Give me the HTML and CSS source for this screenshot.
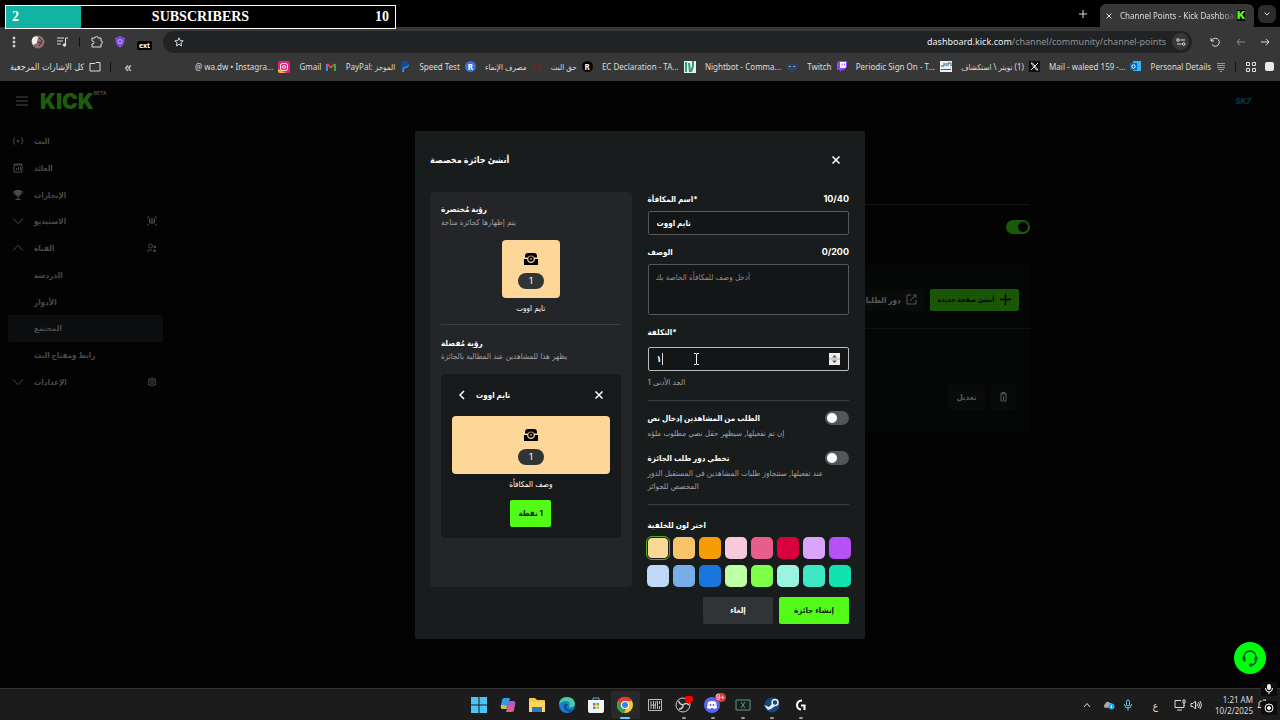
FILE: index.html
```html
<!DOCTYPE html>
<html lang="ar" dir="ltr">
<head>
    <meta charset="UTF-8">
    <meta name="viewport" content="width=device-width, initial-scale=1.0">
    <title>Channel Points - Kick Dashboard</title>
    <link rel="stylesheet" href="styles.css">
</head>
<body>
    <!-- Stream goal overlay -->
    <div class="goal">
        <span>2</span>
        <span>SUBSCRIBERS</span>
        <span>10</span>
    </div>

    <!-- Browser -->
    <header class="browser">
        <div class="tabs">
            <button class="icon-btn" aria-label="New tab"><svg width="8" height="8" viewBox="0 0 8 8"><path d="M4 0v8M0 4h8"/></svg></button>
            <div class="tab">
                <button class="icon-btn" aria-label="Close tab"><svg width="6" height="6" viewBox="0 0 6 6"><path d="M.5.5l5 5M5.500.5l-5 5"/></svg></button>
                <span class="tab-title">Channel Points - Kick Dashboar</span>
                <span class="favicon">K</span>
            </div>
            <button class="tab-menu" aria-label="Search tabs"><svg width="6" height="4" viewBox="0 0 6 4"><path d="M.5.5L3 3 5.500.5"/></svg></button>
        </div>
        <div class="toolbar">
            <div class="tools">
                <svg class="fill" width="12" height="12" viewBox="0 0 12 12"><circle cx="6" cy="2" r="1"/><circle cx="6" cy="6" r="1"/><circle cx="6" cy="10" r="1"/></svg>
                <svg width="14" height="14" viewBox="0 0 14 14"><circle cx="7" cy="7" r="6.500" fill="#8c6f70" stroke="none"/><path d="M1 4Q3 0 7 2L6 8 2 10Q0 7 1 4" fill="#eee" stroke="none"/><path d="M8 3l3 3-3 5M6 7l5 1" stroke="#5c2733"/></svg>
                <svg width="12" height="12" viewBox="0 0 12 12"><path d="M1 2h7M1 5h6M1 8h4M9.500 9V2H12"/><circle cx="8.500" cy="9" r="1.300" fill="#ddd"/></svg>
                <i class="sep"></i>
                <svg width="12" height="12" viewBox="0 0 12 12"><path d="M1 2h3q0-1.500 1.500-1.500T7 2h3v3q1.500 0 1.500 1.300T10 8v3H1V8q2 0 2-1.500T1 5z"/></svg>
                <svg width="12" height="12" viewBox="0 0 12 12"><path d="M6 0l5 2q0 7-5 10Q1 9 1 2z" fill="#7b4bd0" stroke="none"/><circle cx="6" cy="5.500" r="2" stroke="#c7adff"/></svg>
                <span class="ext">ext</span>
            </div>
            <div class="address">
                <svg width="10" height="10" viewBox="0 0 10 10"><path d="M5 .8l1.200 2.800 3 .3-2.300 2 .7 3L5 7.300 2.400 8.900l.7-3-2.300-2 3-.3z"/></svg>
                <span class="url"><b>dashboard.kick.com</b>/channel/community/channel-points</span>
                <span class="site-info"><svg width="10" height="8" viewBox="0 0 10 8"><path d="M4.500 2H9M1 6h4.500"/><circle cx="2" cy="2" r="1.300"/><circle cx="7.700" cy="6" r="1.300"/></svg></span>
            </div>
            <svg width="10" height="10" viewBox="0 0 10 10"><path d="M1 1v3h3M1.500 4A4 4 0 1 1 2 7.500"/></svg>
            <svg class="dim" width="9" height="8" viewBox="0 0 9 8"><path d="M9 4H1M4 .8L1 4l3 3.200"/></svg>
            <svg width="9" height="8" viewBox="0 0 9 8"><path d="M0 4h8M5 .8L8 4 5 7.200"/></svg>
        </div>
        <nav class="bookmarks">
            <a href="#" class="all">كل الإشارات المرجعية<svg width="12" height="10" viewBox="0 0 12 10"><path d="M1 1.500h5l1-1h4v8.500H1z"/></svg></a>
            <i class="sep"></i>
            <a href="#" class="more">«</a>
            <a href="#">@ wa.dw • Instagra...<svg width="12" height="12" viewBox="0 0 12 12"><rect width="12" height="12" rx="2" fill="#e8207d" stroke="none"/><path d="M0 8l8 4H2Q0 12 0 10z" fill="#ffae2b" stroke="none"/><rect x="2.500" y="2.500" width="7" height="7" rx="2" stroke="#fff"/><circle cx="6" cy="6" r="1.500" stroke="#fff"/></svg></a>
            <a href="#">Gmail<svg width="10" height="8" viewBox="0 0 10 8"><path d="M1 8V1" stroke="#4285f4" stroke-width="2"/><path d="M1 1l4 3.500L9 1" stroke="#ea4335" stroke-width="2"/><path d="M9 8V1" stroke="#34a853" stroke-width="2"/></svg></a>
            <a href="#">PayPal: الموجز<svg width="10" height="11" viewBox="0 0 10 11"><path d="M2 0h4q3 0 2.500 3T4 6L3 9H0z" fill="#174a9c" stroke="none"/><path d="M8.500 3q1.500 4-4 4L4 11H2l1.500-5Q8 6 8.500 3" fill="#21a4e0" stroke="none"/></svg></a>
            <a href="#">Speed Test<span class="round blue">R</span></a>
            <a href="#">مصرف الإنماء<svg width="10" height="10" viewBox="0 0 10 10"><circle cx="5" cy="5" r="3.500" stroke="#6d2a25" stroke-width="2" stroke-dasharray="2 1"/></svg></a>
            <a href="#">حق البث<span class="round">R</span></a>
            <a href="#">EC Declaration - TA...<svg width="12" height="12" viewBox="0 0 12 12"><path d="M0 0h12v12H0z" fill="#e6f3ec" stroke="none"/><path d="M2 1v10M5 2l1 9M9 0v5l-2 6" stroke="#2d9e77" stroke-width="2"/></svg></a>
            <a href="#">Nightbot - Comma...<svg width="12" height="12" viewBox="0 0 12 12"><path d="M1 1l2 2h6l2-2v7L6 11 1 8z" fill="#2d435f" stroke="none"/><path d="M3 5.500h1.500M7.500 5.500H9" stroke="#b8ccee"/></svg></a>
            <a href="#">Twitch<svg width="10" height="11" viewBox="0 0 10 11"><path d="M2 0h8v6L7 9H5l-2 2V9H0V2z" fill="#9146ff" stroke="none"/><path d="M3 1h6v5L8 7H3z" fill="#fff" stroke="none"/><path d="M5 2.500v2M7.500 2.500v2" stroke="#9146ff"/></svg></a>
            <a href="#">Periodic Sign On - T...<svg width="12" height="11" viewBox="0 0 12 11"><path d="M0 0h12v11H0z" fill="#eaf0f4" stroke="none"/><path d="M1 5h3V2M6 5V2M8 5V2h3v3M1 8.500h10" stroke="#246b8c"/></svg></a>
            <a href="#"><bdi dir="rtl">(1) تويتر \ استكشاف</bdi><svg width="11" height="11" viewBox="0 0 11 11"><path d="M0 0h11v11H0z" fill="#0b0b0b" stroke="none"/><path d="M2 2h1.500L9 9H7.500zM9 2L2 9"/></svg></a>
            <a href="#">Mail - waleed 159 -...<svg width="11" height="11" viewBox="0 0 11 11"><path d="M3 0h8v10H3z" fill="#35b5ef" stroke="none"/><path d="M0 2h7v7H0z" fill="#0a62b7" stroke="none"/><circle cx="3.500" cy="5.500" r="1.700" stroke="#fff"/></svg></a>
            <a href="#">Personal Details<svg width="10" height="10" viewBox="0 0 10 10"><path d="M1 1.500h8M1 3.500h8M1 5.500h8M2 7.500h6M4 9.500h2" stroke="#999"/></svg></a>
            <i class="sep"></i>
            <svg class="apps" width="10" height="10" viewBox="0 0 10 10"><path d="M.5.5h3v3h-3zM6.500.5h3v3h-3zM.5 6.500h3v3h-3zM6.500 6.500h3v3h-3z"/></svg>
            <i class="square"></i>
        </nav>
    </header>

    <div class="page">
        <aside class="sidebar">
            <div class="brand">
                <svg width="12" height="10" viewBox="0 0 12 10"><path d="M0 1h12M0 5h12M0 9h12"/></svg>
                <span class="logo">KICK</span><sup>BETA</sup>
            </div>
            <ul class="menu">
                <li><svg viewBox="0 0 12 12"><path d="M2.500 2.500q-2.500 3.500 0 7M9.500 2.500q2.500 3.500 0 7"/><circle cx="6" cy="6" r="1"/></svg><a href="#">البث</a></li>
                <li><svg viewBox="0 0 12 12"><path d="M2 2h8v8H2zM2 3h8M4.500 8V6M6.500 8V5M8.500 8V5"/></svg><a href="#">العائد</a></li>
                <li><svg viewBox="0 0 12 12"><path d="M3.500 1.500h5v3Q8 7 6 7T3.500 4.500z" fill="#4a4a4a"/><path d="M3 2.500H1.500q0 3 2.500 3M9 2.500h1.500q0 3-2.500 3M6 7v3M3.500 10.500h5"/></svg><a href="#">الإنجازات</a></li>
                <li><svg viewBox="0 0 12 12"><path d="M1 3.500l5 5 5-5"/></svg><a href="#">الاستيديو</a><svg viewBox="0 0 12 12"><path d="M2 3.500V2h1M9 2h1v1.500M10 9v1H9M3 10H2V9M3.500 4h5v4h-5z"/><circle cx="6" cy="6" r="1"/></svg></li>
                <li><svg viewBox="0 0 12 12"><path d="M1 8.500l5-5 5 5"/></svg><a href="#">القناة</a><svg viewBox="0 0 12 12"><circle cx="4.500" cy="4" r="2"/><path d="M2 10V8h4M8 4h1.500v1.500H8zM7.500 8h2v1.500h-2z"/></svg></li>
                <li><a href="#">الدردشة</a></li>
                <li><a href="#">الأدوار</a></li>
                <li class="active"><a href="#">المجتمع</a></li>
                <li><a href="#">رابط ومفتاح البث</a></li>
                <li><svg viewBox="0 0 12 12"><path d="M1 3.500l5 5 5-5"/></svg><a href="#">الإعدادات</a><svg viewBox="0 0 12 12"><path d="M6 1.800l1 1.400 2.600-.2-.6 1.800.9 1.200-.9 1.300.6 1.700L7 8.800 6 10.200 5 8.800 2.400 9 3 7.300 2.100 6 3 4.800 2.400 3l2.600.2z"/><circle cx="6" cy="6" r="1.500"/></svg></li>
            </ul>
        </aside>

        <main class="content">
            <div class="account">SK7</div>
            <section class="points">
                <div class="enable"><input type="checkbox" class="switch on" aria-label="نقاط القناة" checked></div>
                <div class="rewards">
                    <div class="rewards-head">
                        <button class="dark-btn">دور الطلبات<svg width="11" height="11" viewBox="0 0 11 11"><path d="M5 1H1v9h9V6M7 1h3v3M10 1L4 7"/></svg></button>
                        <button class="new-btn">أنشئ صفحة جديدة<svg width="11" height="11" viewBox="0 0 11 11"><path d="M5.500 0v11M0 5.500h11" stroke-width="1.500"/></svg></button>
                    </div>
                    <div class="reward-row">
                        <button class="dark-btn">تعديل</button>
                        <button class="dark-btn" aria-label="حذف"><svg width="9" height="10" viewBox="0 0 9 10"><path d="M1 2h7M3 2V.5h3V2M2 2.500v6.500h5v-6.500M4.500 4v4"/></svg></button>
                    </div>
                </div>
            </section>
        </main>

        <div class="backdrop">
            <form class="modal" role="dialog" aria-labelledby="modal-title">
                <div class="modal-head">
                    <h1 id="modal-title">أنشئ جائزة مخصصة</h1>
                    <button type="button" class="close" aria-label="إغلاق"><svg width="8" height="8" viewBox="0 0 8 8"><path d="M.5.5l7 7M7.500.5l-7 7"/></svg></button>
                </div>
                <div class="modal-body">
                    <div class="preview">
                        <h2>رؤية مُختصرة</h2>
                        <p class="muted">يتم إظهارها كجائزة متاحة</p>
                        <div class="tile small">
                            <svg width="14" height="12" viewBox="0 0 14 12"><path d="M1 4.500V3q0-3 3-3h6q3 0 3 3v1.500h-2.500Q9 2.500 7 2.500T3.500 4.500zM0 6h3q.5 4 4 4t4-4h3v6H0z"/><circle cx="7" cy="6" r="2.700"/><path d="M7 5v2" class="key"/></svg>
                            <span class="pill">1</span>
                        </div>
                        <p class="caption">تايم اووت</p>
                        <hr>
                        <h2>رؤية مُفصلة</h2>
                        <p class="muted">يظهر هذا للمشاهدين عند المطالبة بالجائزة</p>
                        <div class="detail">
                            <div class="detail-head">
                                <svg width="6" height="10" viewBox="0 0 6 10"><path d="M5 1L1 5l4 4"/></svg>
                                <strong>تايم اووت</strong>
                                <svg width="8" height="8" viewBox="0 0 8 8"><path d="M.5.5l7 7M7.500.5l-7 7"/></svg>
                            </div>
                            <div class="tile">
                                <svg width="14" height="12" viewBox="0 0 14 12"><path d="M1 4.500V3q0-3 3-3h6q3 0 3 3v1.500h-2.500Q9 2.500 7 2.500T3.500 4.500zM0 6h3q.5 4 4 4t4-4h3v6H0z"/><circle cx="7" cy="6" r="2.700"/><path d="M7 5v2" class="key"/></svg>
                                <span class="pill">1</span>
                            </div>
                            <p class="caption">وصف المكافأة</p>
                            <button type="button" class="claim" dir="rtl">1 نقطة</button>
                        </div>
                    </div>

                    <div class="fields">
                        <div class="label-row"><label for="rewardName">اسم المكافأة*</label><span class="count">10/40</span></div>
                        <input type="text" id="rewardName" value="تايم اووت">
                        <div class="label-row"><label for="rewardText">الوصف</label><span class="count">0/200</span></div>
                        <textarea id="rewardText" placeholder="أدخل وصف للمكافأة الخاصة بك"></textarea>
                        <div class="label-row"><label for="rewardCost">التكلفة*</label></div>
                        <div class="cost">
                            <input type="text" inputmode="numeric" id="rewardCost" value="١">
                            <i class="caret"></i>
                            <svg class="spinner" width="11" height="12" viewBox="0 0 11 12"><path d="M0 0h11v12H0z" fill="#eee"/><path d="M3 4.500L5.500 2 8 4.500zM3 7.500L5.500 10 8 7.500z" fill="#555"/><path d="M0 6h11" stroke="#aaa"/></svg>
                            <svg class="pointer" width="5" height="12" viewBox="0 0 5 12"><path d="M0 .5h2l.5.5.5-.5h2M2.500 1v10M0 11.500h2l.5-.5.5.5h2"/></svg>
                        </div>
                        <p class="muted hint">الحد الأدنى 1</p>
                        <hr>
                        <div class="label-row"><label for="askText">الطلب من المشاهدين إدخال نص</label><input type="checkbox" class="switch" id="askText"></div>
                        <p class="muted">إن تم تفعيلها, سيظهر حقل نصي مطلوب ملؤه</p>
                        <div class="label-row"><label for="skipQueue">تخطي دور طلب الجائزة</label><input type="checkbox" class="switch" id="skipQueue"></div>
                        <p class="muted">عند تفعيلها, ستتجاوز طلبات المشاهدين في المستقبل الدور المخصص للجوائز</p>
                        <hr>
                        <div class="label-row color-label"><span id="colorLabel">اختر لون للخلفية</span></div>
                        <div class="colors" role="radiogroup" aria-labelledby="colorLabel">
                            <input type="radio" name="color" class="peach" aria-label="peach" checked>
                            <input type="radio" name="color" class="apricot" aria-label="apricot">
                            <input type="radio" name="color" class="orange" aria-label="orange">
                            <input type="radio" name="color" class="pink" aria-label="pink">
                            <input type="radio" name="color" class="rose" aria-label="rose">
                            <input type="radio" name="color" class="red" aria-label="red">
                            <input type="radio" name="color" class="lilac" aria-label="lilac">
                            <input type="radio" name="color" class="purple" aria-label="purple">
                            <input type="radio" name="color" class="ice" aria-label="ice">
                            <input type="radio" name="color" class="sky" aria-label="sky">
                            <input type="radio" name="color" class="azure" aria-label="azure">
                            <input type="radio" name="color" class="lime" aria-label="lime">
                            <input type="radio" name="color" class="green" aria-label="green">
                            <input type="radio" name="color" class="mint" aria-label="mint">
                            <input type="radio" name="color" class="aqua" aria-label="aqua">
                            <input type="radio" name="color" class="teal" aria-label="teal">
                        </div>
                    </div>
                </div>
                <div class="modal-foot">
                    <button type="button" class="cancel">إلغاء</button>
                    <button type="button" class="submit">إنشاء جائزة</button>
                </div>
            </form>
        </div>

        <button class="support" aria-label="Support"><svg width="18" height="18" viewBox="0 0 18 18"><path d="M3 10V8a6 6 0 0 1 12 0v2M15 11q0 4-4 5" stroke-width="1.500"/><path d="M2 8h2v4H3Q1 10 2 8M16 8h-2v4h1q2-2 1-4" fill="#052"/><circle cx="10" cy="16" r="1.300" fill="#052"/></svg></button>
    </div>

    <!-- Windows taskbar -->
    <footer class="taskbar">
        <div class="apps-row">
            <span><svg viewBox="0 0 18 18"><path d="M1 1h7.500v7.500H1zM9.500 1H17v7.500H9.500zM1 9.500h7.500V17H1zM9.500 9.500H17V17H9.500z" fill="#4cc2f5"/></svg></span>
            <span><svg viewBox="0 0 18 18"><path d="M5 2h6L8 13H4q-3 0-2-4l1-5q.5-2 2-2" fill="#2b9fe0"/><path d="M4 9l4 1-1 3H4q-3 0-2-4z" fill="#e6b93c"/><path d="M10 5h4q3 0 2 4l-1 5q-.5 2-2 2H7z" fill="#e05b8c"/><path d="M10 5h4q3 0 2 4L9 9z" fill="#a25be0"/></svg></span>
            <span><svg viewBox="0 0 18 18"><path d="M1 3q0-1 1-1h5l2 2h7q1 0 1 1v11H1z" fill="#f7c94a"/><path d="M1 6h16v10H1z" fill="#ffd65c"/><path d="M4 11h10v5H4z" fill="#2b77ba"/></svg></span>
            <span><svg viewBox="0 0 18 18"><circle cx="9" cy="9" r="8" fill="#1b7fcf"/><path d="M1 8q1-7 8-7 7 0 8 7-1 4-6 3 2-6-3-6Q4 5 1 8" fill="#42cf9c"/><path d="M6 8q-2 7 6 8 3-1 4-3-5 2-7-1-1-2 1-4z" fill="#12539a"/></svg></span>
            <span><svg viewBox="0 0 18 18"><path d="M6 5V2h6v3" fill="none" stroke="#55aee8"/><path d="M1 4h16v11q0 2-2 2H3q-2 0-2-2z" fill="#f1f3f5"/><path d="M6 7h2.500v2.500H6z" fill="#e45334"/><path d="M9.500 7H12v2.500H9.500z" fill="#6eaf3a"/><path d="M6 10.500h2.500V13H6z" fill="#2f95dd"/><path d="M9.500 10.500H12V13H9.500z" fill="#f2b530"/></svg></span>
            <span class="current"><svg viewBox="0 0 18 18"><circle cx="9" cy="9" r="8" fill="#f8c830"/><path d="M2 5a8 8 0 0 1 14 0H9a4 4 0 0 0-4 5z" fill="#e33b2e"/><path d="M2 5l4 7 4 1-2 4A8 8 0 0 1 2 5" fill="#2ba24c"/><circle cx="9" cy="9" r="4" fill="#fff"/><circle cx="9" cy="9" r="3" fill="#3f7fe8"/></svg></span>
            <span><svg viewBox="0 0 18 18"><g fill="none" stroke="#bbb"><path d="M2.500 3.500h13v11h-13z"/><path d="M5 5v8M7.500 5v8M5 9h4M10 5l-1 8M11.500 5v8M13.500 5v3M13.500 10v3"/></g></svg></span>
            <span class="running"><svg viewBox="0 0 18 18"><circle cx="8" cy="9" r="7" fill="#222" stroke="#ccc"/><path d="M8 9q-4-1-4-4M8 9q3-3 6 0M8 9q0 4-4 4" fill="none" stroke="#ccc" stroke-width="1.500"/><circle cx="14" cy="3" r="4" fill="#f00"/></svg></span>
            <span class="running"><svg viewBox="0 0 18 18"><circle cx="8" cy="9" r="8" fill="#5865f2"/><path d="M4 6q4-2 8 0l1 6-3 1-1-1H7l-1 1-3-1z" fill="#fff"/><circle cx="6.500" cy="9" r="1" fill="#5865f2"/><circle cx="9.500" cy="9" r="1" fill="#5865f2"/></svg><em>9+</em></span>
            <span class="running"><svg viewBox="0 0 18 18"><path d="M2 4h14v10H2zM7 6l4 6M11 6l-4 6" fill="none" stroke="#5c9780"/></svg></span>
            <span class="running"><svg viewBox="0 0 18 18"><circle cx="9" cy="9" r="7.500" fill="#14477c"/><path d="M1 9l5 2 4-4 2 3-4 3-3 1z" fill="#eee"/><circle cx="12" cy="6.500" r="3" fill="#14477c" stroke="#eee" stroke-width="1.500"/></svg></span>
            <span class="running"><svg viewBox="0 0 18 18"><path d="M10 4.500Q5 5 5 9t4 4.500M9 9.500h3.500V14" fill="none" stroke="#fff" stroke-width="2"/></svg></span>
        </div>
        <div class="tray">
            <svg width="8" height="6" viewBox="0 0 8 6"><path d="M1 5l3-3.500L7 5"/></svg>
            <svg width="12" height="10" viewBox="0 0 12 10"><path d="M2 8Q0 6 2 4q2-4 5-1 3 0 3 4z" fill="#aaa" stroke="none"/><circle cx="8.500" cy="6.500" r="3" fill="#25a7e8" stroke="none"/><path d="M8.500 5v3" stroke="#fff"/></svg>
            <svg width="10" height="12" viewBox="0 0 10 12"><rect x="3.500" y="1" width="3" height="6" rx="1.500" stroke="#7cc8e8"/><path d="M1.500 5q0 4 3.500 4t3.500-4M5 9v2.500" stroke="#7cc8e8"/></svg>
            <span class="lang">ع</span>
            <svg width="12" height="12" viewBox="0 0 12 12"><path d="M7 1.500H1v7h9V6M3 11h5M9 1h2v3H9zM10 4v3"/></svg>
            <svg width="12" height="10" viewBox="0 0 12 10"><path d="M1 3.500h2L5.500 1v8L3 6.500H1zM7 3.500q1 1.500 0 3M8.500 2q2 3 0 6M10 1q3 4 0 8"/></svg>
            <div class="clock"><time>1:21 AM</time><time>10/2/2025</time></div>
            <svg width="10" height="11" viewBox="0 0 10 11"><path d="M1 8.500h7L7 7V4q0-2-2.500-2T2 4v3zM6 1h3L6 4h3M4 10h2"/></svg>
        </div>
        <div class="recorder">
            <svg width="16" height="14" viewBox="0 0 16 14"><rect x="6" y="2" width="4" height="6" rx="2" fill="#eee" stroke="none"/><path d="M4.500 6q0 4 3.500 4t3.500-4M8 10v2"/></svg>
            <svg width="16" height="14" viewBox="0 0 16 14"><circle cx="8" cy="7" r="4"/><circle cx="8" cy="7" r="1.500" fill="#eee"/></svg>
        </div>
    </footer>
</body>
</html>
```

FILE: styles.css
```css
* {
    box-sizing: border-box;
}
body {
    margin: 0;
    height: 100vh;
    display: flex;
    flex-direction: column;
    background-color: #030303;
    color: #fff;
    font-family: Inter, "DejaVu Sans Condensed", "DejaVu Sans", sans-serif;
    font-size: 9px;
    overflow: hidden;
}
h1, h2, p, ul {
    margin: 0;
    padding: 0;
}
a {
    color: inherit;
    text-decoration: none;
}
button {
    font: inherit;
    color: inherit;
    border: none;
    padding: 0;
    background: none;
    cursor: pointer;
}
svg {
    display: block;
    flex: none;
    fill: none;
    stroke: currentColor;
}
hr {
    width: 100%;
    height: 1px;
    margin: 0;
    border: none;
    background-color: #3b3e41;
}

/* Goal bar */
.goal {
    position: absolute;
    left: 5px;
    top: 5px;
    z-index: 5;
    width: 391px;
    height: 24px;
    padding: 0 6px;
    display: grid;
    grid-template-columns: 1fr auto 1fr;
    align-items: center;
    border: 1px solid #fff;
    background: linear-gradient(to right, #12b3a2 75px, #000 75px);
    font-family: "Liberation Serif", serif;
    font-weight: bold;
    font-size: 14px;
}
.goal span:last-child {
    text-align: right;
}

/* Browser */
.browser {
    flex: none;
    color: #dedede;
    background-color: #373737;
    font-family: "Noto Sans", "DejaVu Sans Condensed", "DejaVu Sans", sans-serif;
}
.tabs {
    display: flex;
    justify-content: flex-end;
    align-items: center;
    height: 27px;
    gap: 4px;
    padding: 0 4px 0 0;
    background-color: #000;
}
.tabs .icon-btn {
    padding: 5px;
}
.tab {
    display: flex;
    align-items: center;
    align-self: flex-end;
    width: 154px;
    height: 23px;
    margin-left: 4px;
    padding: 0 11px 0 1px;
    border-radius: 6px 6px 0 0;
    background-color: #373737;
    font-size: 8px;
}
.tab-title {
    flex: 1;
    white-space: nowrap;
    margin: 0 0 0 3px;
    mask-image: linear-gradient(to right, #000 85%, transparent);
}
.favicon {
    width: 11px;
    height: 11px;
    background-color: #000;
    color: #53fc18;
    font: 900 11px/11px Inter, sans-serif;
    text-align: center;
}
.tab-menu {
    display: grid;
    place-items: center;
    width: 18px;
    height: 18px;
    border-radius: 6px;
    background-color: #2c2c2c;
}
.toolbar {
    display: flex;
    align-items: center;
    gap: 16px;
    height: 29px;
    padding: 0 9px 0 8px;
}
.tools {
    display: flex;
    align-items: center;
    gap: 11px;
}
.fill {
    fill: currentColor;
}
.sep {
    width: 1px;
    height: 10px;
    background-color: #111;
}
.ext {
    padding: 0 2px;
    margin: 8px 0 0;
    border-radius: 2px;
    background-color: #000;
    color: #fff;
    font-weight: bold;
    font-size: 7px;
    line-height: 9px;
}
.address {
    flex: 1;
    display: flex;
    align-items: center;
    height: 22px;
    margin: 0 2px 0 -5px;
    padding: 0 3px 0 11px;
    border-radius: 11px;
    background-color: #202224;
}
.toolbar > svg:last-child {
    margin-right: 1px;
}
.url {
    margin-left: auto;
    color: #929292;
}
.url b {
    font-weight: normal;
    color: #eee;
}
.site-info {
    display: grid;
    place-items: center;
    width: 17px;
    height: 17px;
    margin-left: 6px;
    border-radius: 50%;
    background-color: #383838;
}
.dim {
    color: #8a8a8a;
}
.bookmarks {
    display: flex;
    align-items: center;
    justify-content: space-between;
    height: 25px;
    padding: 0 6px 4px 10px;
    font-size: 8px;
    white-space: nowrap;
}
.bookmarks a {
    display: flex;
    align-items: center;
    gap: 5px;
}
.bookmarks .all {
    font-size: 9px;
}
.bookmarks .more {
    margin: 0 54px 0 4px;
    font-size: 14px;
}
.round {
    width: 11px;
    height: 11px;
    border-radius: 50%;
    background-color: #000;
    color: #fff;
    font-weight: bold;
    font-size: 8px;
    line-height: 11px;
    text-align: center;
}
.round.blue {
    background-color: #3b6fe0;
}
.square {
    width: 9px;
    height: 9px;
    border-radius: 2px;
    background-color: #e8e8e8;
}

/* Dashboard */
.page {
    position: relative;
    flex: 1;
    display: flex;
    min-height: 0;
}
.sidebar {
    width: 171px;
    padding: 10px 8px;
    color: #4a4a4a;
    font-weight: bold;
}
.brand {
    display: flex;
    align-items: center;
    height: 20px;
    padding-left: 8px;
}
.logo {
    margin-left: 12px;
    color: #1d5c0c;
    font-weight: 900;
    font-size: 21px;
}
.brand sup {
    align-self: flex-start;
    font-size: 5px;
    line-height: 5px;
}
.menu {
    display: grid;
    grid-auto-rows: 1fr;
    height: 267px;
    margin-top: 17px;
    list-style: none;
}
.menu li {
    display: grid;
    grid-template-columns: 12px 1fr 12px;
    column-gap: 10px;
    align-items: center;
    width: 155px;
    padding: 0 5px 0 4px;
    font-size: 8px;
}
.menu a {
    grid-column: 2;
}
.menu .active {
    border-radius: 2px;
    background-color: #0b0d0e;
}
.content {
    flex: 1;
    color: #595959;
}
.account {
    height: 20px;
    margin: 10px 29px 0 0;
    color: #0b3b52;
    font: italic bold 8px/20px Inter, sans-serif;
    text-align: right;
}
.points {
    max-width: 608px;
    margin: 93px auto 0;
    border-top: 1px solid #151515;
}
.enable {
    display: flex;
    justify-content: flex-end;
    height: 60px;
    padding-top: 15px;
}
.rewards {
    height: 168px;
    background-color: #050707;
}
.rewards-head {
    display: flex;
    justify-content: flex-end;
    align-items: center;
    gap: 6px;
    height: 64px;
    padding: 6px 11px 0 0;
    border-bottom: 1px solid #101212;
}
.reward-row {
    display: flex;
    justify-content: flex-end;
    gap: 6px;
    padding: 55px 14px 0 0;
}
.dark-btn, .new-btn {
    display: flex;
    align-items: center;
    justify-content: center;
    gap: 5px;
    height: 22px;
    padding: 0 7px;
    border-radius: 2px;
    background-color: #090b0b;
    font-weight: bold;
    font-size: 8px;
}
.new-btn {
    padding: 0 8px;
    background-color: #195707;
    color: #030303;
    font-size: 7px;
}
.reward-row .dark-btn {
    height: 26px;
    padding: 0 8px;
}

/* Switches */
.switch {
    appearance: none;
    width: 24px;
    height: 14px;
    margin: 0;
    padding: 2px;
    border-radius: 7px;
    background-color: #52555b;
}
.switch::before {
    content: "";
    display: block;
    width: 10px;
    height: 10px;
    border-radius: 50%;
    background-color: #fff;
}
.switch.on {
    background-color: #1b5a0a;
}
.switch.on::before {
    margin-left: auto;
    background-color: #030303;
}

/* Reward dialog */
.backdrop {
    position: absolute;
    inset: 0;
    display: flex;
    align-items: center;
    justify-content: center;
}
.modal {
    width: 450px;
    padding: 15px 16px 15px 15px;
    border-radius: 2px;
    background-color: #191c1d;
}
.modal-head {
    display: flex;
    justify-content: space-between;
    align-items: center;
    height: 28px;
    margin-bottom: 18px;
}
.modal h1 {
    font-size: 9px;
}
.close {
    padding: 9px;
}
.modal-body {
    display: grid;
    grid-template-columns: 1fr 1fr;
    gap: 16px;
}
.preview {
    padding: 10px 11px;
    border-radius: 4px;
    background-color: #232528;
}
.modal h2 {
    font-size: 8px;
    line-height: 14px;
}
.muted {
    color: #a0a2a4;
    font-size: 8px;
    line-height: 13px;
}
.tile {
    display: flex;
    flex-direction: column;
    align-items: center;
    justify-content: center;
    gap: 8px;
    height: 58px;
    padding-top: 4px;
    border-radius: 4px;
    background-color: #fdd798;
}
.tile.small {
    width: 58px;
    margin: 11px auto 0;
}
.tile svg {
    fill: #000;
    stroke: none;
}
.tile .key {
    stroke: #fdd798;
}
.pill {
    width: 26px;
    height: 16px;
    border-radius: 8px;
    background-color: #2f3437;
    font-size: 9px;
    line-height: 16px;
    text-align: center;
}
.caption {
    margin: 3px 0 9px;
    font-size: 8px;
    line-height: 14px;
    text-align: center;
}
.preview hr {
    margin-bottom: 11px;
}
.detail {
    margin-top: 11px;
    padding: 11px;
    border-radius: 4px;
    background-color: #18191b;
}
.detail-head {
    display: flex;
    align-items: center;
    gap: 11px;
    height: 20px;
    margin-bottom: 11px;
    padding: 0 7px;
    font-size: 8px;
}
.detail-head svg:last-child {
    margin-left: auto;
}
.detail-head svg, .close svg {
    stroke-width: 1.5;
}
.claim {
    display: block;
    height: 27px;
    margin: 0 auto;
    padding: 0 8px;
    border-radius: 2px;
    background-color: #53fc18;
    color: #0b1a06;
    font-weight: bold;
    font-size: 8px;
}
.fields {
    display: flex;
    flex-direction: column;
}
.label-row {
    display: flex;
    justify-content: space-between;
    align-items: center;
    height: 14px;
    margin-bottom: 5px;
    font-weight: bold;
    font-size: 8px;
}
.count {
    font-size: 9px;
}
.fields input[type="text"], textarea {
    display: block;
    width: 100%;
    height: 24px;
    margin: 0 0 10px;
    padding: 0 8px;
    border: 1px solid #55585a;
    border-radius: 2px;
    outline: none;
    background-color: #131517;
    color: #fff;
    font: bold 8px Inter, "DejaVu Sans Condensed", "DejaVu Sans", sans-serif;
}
.fields textarea {
    height: 51px;
    padding: 7px 7px;
    resize: none;
    font-weight: normal;
}
textarea::placeholder {
    color: #8f9193;
}
.cost {
    position: relative;
    padding-top: 3px;
}
.fields .cost input {
    margin: 0 0 5px;
    border-color: #b9bbbc;
    font-size: 9px;
}
.caret {
    position: absolute;
    left: 14px;
    top: 9px;
    width: 1px;
    height: 12px;
    background-color: #ddd;
}
.spinner {
    position: absolute;
    right: 9px;
    top: 9px;
    stroke: none;
}
.pointer {
    position: absolute;
    left: 46px;
    top: 9px;
}
.fields hr {
    margin: 11px 0 10px;
}
.fields .switch {
    flex: none;
}
.fields .label-row:has(.switch) {
    margin-bottom: 2px;
}
.fields .muted + .label-row {
    margin-top: 11px;
}
.color-label {
    margin-top: 3px;
}
.colors {
    display: grid;
    grid-template-columns: repeat(8, 22px);
    justify-content: space-between;
    row-gap: 6px;
    margin: 0 -2px 0 -1px;
}
.colors input {
    appearance: none;
    height: 22px;
    margin: 0;
    border-radius: 5px;
}
.colors input:checked {
    border: 1px solid #191c1d;
    outline: 1px solid #53b01e;
}
.peach { background-color: #fdd798; }
.apricot { background-color: #f9c36a; }
.orange { background-color: #f59c07; }
.pink { background-color: #f6cada; }
.rose { background-color: #e65f8c; }
.red { background-color: #d9003e; }
.lilac { background-color: #d9a5fb; }
.purple { background-color: #b650f7; }
.ice { background-color: #bed8f7; }
.sky { background-color: #78ade8; }
.azure { background-color: #1976dc; }
.lime { background-color: #beffa4; }
.green { background-color: #80ff4a; }
.mint { background-color: #9bf4e0; }
.aqua { background-color: #3fe6c3; }
.teal { background-color: #12e2b0; }
.modal-foot {
    display: flex;
    justify-content: flex-end;
    gap: 6px;
    margin-top: 10px;
}
.modal-foot button {
    min-width: 70px;
    height: 27px;
    border-radius: 2px;
    font-weight: bold;
    font-size: 8px;
}
.cancel {
    background-color: #303437;
}
.modal-foot .submit {
    background-color: #53fc18;
    color: #0b1a06;
}
.support {
    position: absolute;
    right: 14px;
    bottom: 14px;
    display: grid;
    place-items: center;
    width: 32px;
    height: 32px;
    border-radius: 50%;
    background-color: #00fe0c;
    color: #052;
}

/* Taskbar */
.taskbar {
    position: relative;
    flex: none;
    display: grid;
    grid-template-columns: 1fr 352px 1fr;
    align-items: center;
    height: 32px;
    border-top: 1px solid #333;
    background-color: #1c1c1c;
    font-family: "Noto Sans", "DejaVu Sans Condensed", sans-serif;
}
.apps-row {
    grid-column: 2;
    display: grid;
    grid-template-columns: repeat(12, 1fr);
}
.apps-row span {
    position: relative;
    display: grid;
    place-items: center;
    height: 28px;
    border-radius: 3px;
}
.apps-row svg {
    width: 18px;
    height: 18px;
    stroke: none;
}
.apps-row .current {
    background-color: #292929;
}
.apps-row .current::after, .running::after {
    content: "";
    position: absolute;
    bottom: 0;
    width: 4px;
    height: 2px;
    border-radius: 1px;
    background-color: #999;
}
.apps-row .current::after {
    width: 10px;
    background-color: #60cdff;
}
.apps-row em {
    position: absolute;
    right: 2px;
    top: 2px;
    padding: 0 1px;
    border-radius: 5px;
    background-color: #d83c3e;
    font: 7px/9px Inter, sans-serif;
}
.tray {
    display: flex;
    justify-content: flex-end;
    align-items: center;
    gap: 8px;
    padding-right: 13px;
    color: #ddd;
}
.tray svg:nth-child(2) {
    margin-left: 4px;
}
.lang {
    margin: 0 8px 0 12px;
    font-size: 10px;
}
.tray svg:nth-child(6) {
    margin: 0 5px 0 -4px;
}
.clock {
    display: flex;
    flex-direction: column;
    margin-right: -4px;
    text-align: right;
    font-size: 8px;
    line-height: 11px;
}
.recorder {
    position: absolute;
    right: 3px;
    top: -7px;
    display: grid;
    gap: 5px;
}
.recorder svg {
    border-radius: 2px;
    background-color: #0d0d0d;
}
```
